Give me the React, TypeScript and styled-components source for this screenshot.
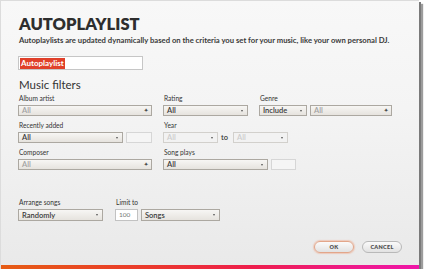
import React from 'react'
import styled, { createGlobalStyle } from 'styled-components'

const GlobalStyle = createGlobalStyle`
  html, body {
    margin: 0;
    padding: 0;
    background: #ffffff;
  }
  body {
    font-family: Lato, "Liberation Sans", sans-serif;
  }
`

const App = () => {
  return (
    <>
      <GlobalStyle />
      <Dialog>
        <Body>
          <Title>AUTOPLAYLIST</Title>
          <Subtitle>
            Autoplaylists are updated dynamically based on the criteria you set for your music, like your own personal DJ.
          </Subtitle>
          <NameInput>
            <Selected>Autoplaylist</Selected>
          </NameInput>
          <SectionTitle>Music filters</SectionTitle>

          <FilterRow>
            <Field w={145}>
              <Label>Album artist</Label>
              <Controls>
                <Select w={134} muted>All<Combo>✦</Combo></Select>
              </Controls>
            </Field>
            <Field w={96}>
              <Label>Rating</Label>
              <Controls>
                <Select w={85}>All<Arrow /></Select>
              </Controls>
            </Field>
            <Field>
              <Label>Genre</Label>
              <Controls>
                <Select w={48}>Include<Arrow /></Select>
                <Select w={82} muted>All<Combo>✦</Combo></Select>
              </Controls>
            </Field>
          </FilterRow>

          <FilterRow>
            <Field w={145}>
              <Label>Recently added</Label>
              <Controls>
                <Select w={105}>All<Arrow /></Select>
                <Box w={26} />
              </Controls>
            </Field>
            <Field>
              <Label>Year</Label>
              <Controls>
                <Select w={55} disabled>All<Arrow /></Select>
                <To>to</To>
                <Select w={55} disabled>All<Arrow /></Select>
              </Controls>
            </Field>
          </FilterRow>

          <FilterRow>
            <Field w={145}>
              <Label>Composer</Label>
              <Controls>
                <Select w={134} muted>All<Combo>✦</Combo></Select>
              </Controls>
            </Field>
            <Field>
              <Label>Song plays</Label>
              <Controls>
                <Select w={105}>All<Arrow /></Select>
                <Box w={25} />
              </Controls>
            </Field>
          </FilterRow>

          <ArrangeRow>
            <Field w={97}>
              <Label>Arrange songs</Label>
              <Controls>
                <Select w={85} tall>Randomly<Arrow /></Select>
              </Controls>
            </Field>
            <Field>
              <Label>Limit to</Label>
              <Controls>
                <NumberBox>100</NumberBox>
                <Select w={79} tall>Songs<Arrow /></Select>
              </Controls>
            </Field>
          </ArrangeRow>

          <Buttons>
            <PillButton primary>OK</PillButton>
            <PillButton>CANCEL</PillButton>
          </Buttons>
        </Body>
        <AccentBar />
      </Dialog>
    </>
  )
}

const Dialog = styled.div`
  width: 419px;
  height: 269px;
  box-sizing: border-box;
  display: flex;
  flex-direction: column;
  border-top: 1px solid #dcdcdc;
  border-left: 1px solid #dcdcdc;
  background: linear-gradient(#f8f8f8, #f4f4f4 40%, #e9e9e9);
  box-shadow: 2px 2px 0 #7a7a7a, 4px 4px 1px rgba(90, 90, 90, 0.6);
`
const Body = styled.div`
  flex: 1;
  padding: 15px 0 0 17px;
  display: flex;
  flex-direction: column;
`
const Title = styled.div`
  font-size: 16.5px;
  font-weight: 800;
  line-height: 17px;
  color: #2e2e2e;
  padding-left: 1px;
`
const Subtitle = styled.div`
  margin-top: 3px;
  font-size: 7.68px;
  font-weight: 700;
  line-height: 9px;
  color: #3a3a3a;
  padding-left: 1px;
  white-space: nowrap;
`
const NameInput = styled.div`
  margin-top: 11px;
  width: 125px;
  height: 14px;
  box-sizing: border-box;
  border: 1px solid #c6c6c6;
  background: #ffffff;
  display: flex;
  align-items: center;
  padding-left: 1px;
`
const Selected = styled.span`
  background: #e0402a;
  color: #ffffff;
  font-size: 8px;
  font-weight: 700;
  line-height: 11px;
  padding: 0 1px;
`
const SectionTitle = styled.div`
  margin-top: 9px;
  font-size: 11.5px;
  line-height: 12px;
  color: #333333;
  padding-left: 1px;
`
const FilterRow = styled.div`
  display: flex;
  margin-top: 3px;
  & + & {
    margin-top: 5px;
  }
`
const ArrangeRow = styled.div`
  display: flex;
  margin-top: 28px;
`
const Field = styled.div<{ w?: number }>`
  display: flex;
  flex-direction: column;
  width: ${({ w }) => w ? `${w}px` : 'auto'};
  flex-shrink: 0;
`
const Label = styled.div`
  font-size: 6.6px;
  line-height: 8px;
  color: #333333;
  padding-left: 1px;
  margin-bottom: 3px;
`
const Controls = styled.div`
  display: flex;
  align-items: center;
  gap: 3px;
`
const Select = styled.div<{ w: number, disabled?: boolean, muted?: boolean, tall?: boolean }>`
  position: relative;
  width: ${({ w }) => w}px;
  height: ${({ tall }) => tall ? 12 : 11}px;
  box-sizing: border-box;
  border: 1px solid ${({ disabled }) => disabled ? '#d2d0cc' : '#aca8a1'};
  background: ${({ disabled }) => disabled
    ? '#f2f2f2'
    : 'linear-gradient(#f7f6f4, #e6e3de)'};
  color: ${({ disabled, muted }) => disabled ? '#cdcdcd' : muted ? '#a2a2a2' : '#3a3a3a'};
  font-size: 7.5px;
  font-weight: 600;
  line-height: 9px;
  padding-left: 3px;
  display: flex;
  align-items: center;
`
const Arrow = styled.span`
  position: absolute;
  right: 4px;
  top: 50%;
  margin-top: -1px;
  width: 0;
  height: 0;
  border-left: 1.5px solid transparent;
  border-right: 1.5px solid transparent;
  border-top: 2px solid #555555;
`
const Combo = styled.span`
  position: absolute;
  right: 3px;
  top: 0;
  bottom: 0;
  display: flex;
  align-items: center;
  font-size: 5px;
  color: #444444;
`
const Box = styled.div<{ w: number }>`
  width: ${({ w }) => w}px;
  height: 11px;
  box-sizing: border-box;
  border: 1px solid #d6d6d6;
  background: #f5f5f5;
`
const To = styled.span`
  font-size: 7.5px;
  font-weight: 600;
  color: #3a3a3a;
  padding: 0 2px 0 0;
`
const NumberBox = styled.div`
  width: 23px;
  height: 12px;
  box-sizing: border-box;
  border: 1px solid #c2c2c2;
  background: #ffffff;
  color: #777777;
  font-size: 6.5px;
  line-height: 10px;
  padding-left: 3px;
`
const Buttons = styled.div`
  display: flex;
  justify-content: flex-end;
  gap: 8px;
  margin-top: 20px;
  padding-right: 17px;
`
const PillButton = styled.div<{ primary?: boolean }>`
  width: 40px;
  height: 12px;
  box-sizing: border-box;
  border-radius: 6px;
  border: 1px solid ${({ primary }) => primary ? '#e3a68a' : '#b9b9b9'};
  box-shadow: ${({ primary }) => primary ? '0 0 1px 1px rgba(240, 170, 140, 0.5)' : 'none'};
  background: linear-gradient(#fbfbfb, #e2e2e2);
  color: #505050;
  font-size: 5.5px;
  font-weight: 800;
  letter-spacing: 0.3px;
  display: flex;
  align-items: center;
  justify-content: center;
`
const AccentBar = styled.div`
  height: 4px;
  background: linear-gradient(90deg, #e65c14 0%, #ea3a2c 35%, #ee1e4c 60%, #ee1a8c 85%, #ef16a8 100%);
`

export default App
